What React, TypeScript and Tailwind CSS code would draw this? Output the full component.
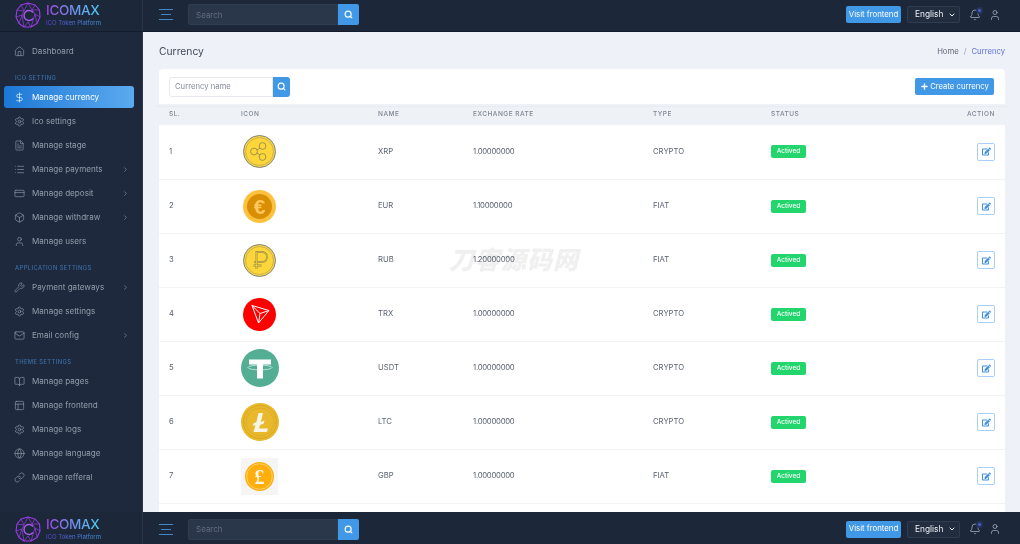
import React from 'react'
import {
  Home, DollarSign, Settings, FileText, List, CreditCard, Box, User, Wrench, Mail,
  BookOpen, Layout, Globe, Link as LinkIcon, Bell, Search, ChevronRight, ChevronDown, Plus,
} from 'lucide-react'
import { FaEdit } from 'react-icons/fa'

const font = "font-['Inter','Liberation_Sans',sans-serif]"

function Logo() {
  return (
    <div className="flex items-center gap-[5px]">
      <svg width="26" height="26" viewBox="0 0 26 26" fill="none" stroke="#9a3ce6" strokeWidth="1.100" strokeLinejoin="round">
        <polygon points="13,1 20,3 24.500,8 25,15 22,21.500 16,25 9,25 4,21.500 1,15 2,8 6,3" />
        <path d="M6 3l3 6 4-8 4 7 3-5M2 8l7 1M17 8l7.500 0M1 15l6-2 2-4M25 15l-5-3-3-4M4 21.500l3-8.500 2 12M22 21.500l-2-9.500-4 13M9 25l4-5 3 5" strokeWidth="0.7" />
        <path d="M18 10.500a5 5 0 1 0 0 6" strokeWidth="1.400" stroke="#a45cea" />
      </svg>
      <div className="flex flex-col">
        <span className="bg-gradient-to-r from-[#a03fe0] via-[#6f8fe8] to-[#45d0ee] bg-clip-text text-[13.500px] leading-[15px] font-medium tracking-[-0.3px] text-transparent">ICOMAX</span>
        <span className="mt-[1px] bg-gradient-to-r from-[#5a44d8] to-[#3f9bd8] bg-clip-text text-[6px] leading-[8px] font-normal text-transparent">ICO Token Platform</span>
      </div>
    </div>
  )
}

function TopBar({ className }: { className: string }) {
  return (
    <header className={`flex h-[34px] shrink-0 bg-[#1c273a] ${className}`}>
      <div className="flex w-[143px] shrink-0 items-center border-r border-[#2b3648] pl-[15px]">
        <Logo />
      </div>
      <div className="flex flex-1 items-center pr-[19px] pl-4">
        <svg width="14" height="11" viewBox="0 0 14 11" className="mr-[15px]" stroke="#3f87c9" strokeWidth="1">
          <path d="M0 .5h14M2 5.500h10M0 10.500h14" />
        </svg>
        <div className="flex h-[21px] w-[171px]">
          <div className="flex flex-1 items-center rounded-l-[2px] border border-[#303c50] bg-[#2a3649] pl-[7px] text-[8px] text-[#626d7f]">Search</div>
          <div className="flex w-[21px] items-center justify-center rounded-r-[2px] bg-[#4098e6]">
            <Search size={9} strokeWidth={3} className="text-white" />
          </div>
        </div>
        <div className="flex-1" />
        <div className="flex h-[17px] w-[55px] items-center justify-center rounded-[2px] bg-[#4098e6] text-[7.800px] font-normal text-white">Visit frontend</div>
        <div className="ml-[6px] flex h-[17px] w-[53px] items-center justify-between rounded-[2px] border border-[#303c50] bg-[#222d40] pr-[3px] pl-[7px] text-[8.300px] font-normal text-[#eef1f5]">
          English
          <ChevronDown size={8} strokeWidth={3} />
        </div>
        <div className="relative ml-[8px] flex w-[14px] justify-center">
          <Bell size={12} strokeWidth={1.500} className="text-[#aab2bf]" />
          <span className="absolute top-[-2px] right-[-1px] size-[7px] rounded-full bg-[#26345a]" />
          <span className="absolute top-[0px] right-[1px] size-[3px] rounded-full bg-[#4a5fd0]" />
        </div>
        <User size={12} strokeWidth={1.500} className="ml-[7px] text-[#aab2bf]" />
      </div>
    </header>
  )
}

type NavItem = { label: string; icon: React.ElementType; arrow?: boolean; active?: boolean }

function NavRow({ item }: { item: NavItem }) {
  const Icon = item.icon
  return (
    <div className="flex h-6 items-center">
      <div
        className={`mr-2 ml-1 flex h-[22px] flex-1 items-center rounded-[3px] pr-[5px] pl-[10px] ${
          item.active ? 'bg-gradient-to-r from-[#1b78d6] to-[#5aaaf0] text-white' : 'text-[#949dac]'
        }`}
      >
        <Icon size={11} strokeWidth={1.400} className="shrink-0" />
        <span className="ml-[7px] flex-1 text-[8.100px] font-normal whitespace-nowrap">{item.label}</span>
        {item.arrow && <ChevronRight size={7} strokeWidth={2} />}
      </div>
    </div>
  )
}

function SectionLabel({ text }: { text: string }) {
  return (
    <div className="flex h-[22px] items-end pb-[3px] pl-[15px] text-[5.800px] leading-[8px] font-medium tracking-[0.4px] text-[#3b6ea5]">
      {text}
    </div>
  )
}

function Sidebar() {
  return (
    <aside className="w-[143px] shrink-0 border-r border-[#2b3648] bg-[#1e293d] pt-[7px]">
      <NavRow item={{ label: 'Dashboard', icon: Home }} />
      <SectionLabel text="ICO SETTING" />
      <NavRow item={{ label: 'Manage currency', icon: DollarSign, active: true }} />
      <NavRow item={{ label: 'Ico settings', icon: Settings }} />
      <NavRow item={{ label: 'Manage stage', icon: FileText }} />
      <NavRow item={{ label: 'Manage payments', icon: List, arrow: true }} />
      <NavRow item={{ label: 'Manage deposit', icon: CreditCard, arrow: true }} />
      <NavRow item={{ label: 'Manage withdraw', icon: Box, arrow: true }} />
      <NavRow item={{ label: 'Manage users', icon: User }} />
      <SectionLabel text="APPLICATION SETTINGS" />
      <NavRow item={{ label: 'Payment gateways', icon: Wrench, arrow: true }} />
      <NavRow item={{ label: 'Manage settings', icon: Settings }} />
      <NavRow item={{ label: 'Email config', icon: Mail, arrow: true }} />
      <SectionLabel text="THEME SETTINGS" />
      <NavRow item={{ label: 'Manage pages', icon: BookOpen }} />
      <NavRow item={{ label: 'Manage frontend', icon: Layout }} />
      <NavRow item={{ label: 'Manage logs', icon: Settings }} />
      <NavRow item={{ label: 'Manage language', icon: Globe }} />
      <NavRow item={{ label: 'Manage refferal', icon: LinkIcon }} />
    </aside>
  )
}

function CoinXrp() {
  return (
    <svg width="33" height="33" viewBox="0 0 33 33" fill="none" className="block">
      <circle cx="16.500" cy="16.500" r="16" fill="#fdd63a" stroke="#7d8284" />
      <circle cx="16.500" cy="16.500" r="14" stroke="#a09a6c" strokeWidth="0.6" />
      <g stroke="#8d8450" strokeWidth="0.8">
        <circle cx="19.500" cy="11" r="3.400" />
        <circle cx="19.500" cy="22" r="3.400" />
        <circle cx="11" cy="16.500" r="3.400" />
        <path d="M14 15l3-2M14 18l3 2" />
      </g>
    </svg>
  )
}

function CoinEur() {
  return (
    <svg width="33" height="33" viewBox="0 0 33 33" className="block">
      <circle cx="16.500" cy="16.500" r="16.500" fill="#fdc13e" />
      <circle cx="16.500" cy="16.500" r="12.500" fill="#d98e04" />
      <text x="16.500" y="24" textAnchor="middle" fontSize="21" fontWeight="700" fontFamily="Liberation Sans" fill="#fdc95c">€</text>
    </svg>
  )
}

function CoinRub() {
  return (
    <svg width="33" height="33" viewBox="0 0 33 33" fill="none" className="block">
      <circle cx="16.500" cy="16.500" r="16" fill="#fdd63a" stroke="#7d8284" />
      <circle cx="16.500" cy="16.500" r="14" stroke="#a09a6c" strokeWidth="0.6" />
      <path d="M13.500 25V8h5.500a5 5 0 0 1 0 10h-8M10.500 21.500h8" stroke="#8d8450" strokeWidth="1.800" />
      <path d="M13.500 25V8h5.500a5 5 0 0 1 0 10h-8M10.500 21.500h8" stroke="#fdd63a" strokeWidth="0.7" />
    </svg>
  )
}

function CoinTrx() {
  return (
    <svg width="33" height="33" viewBox="0 0 33 33" fill="none" className="block">
      <circle cx="16.500" cy="16.500" r="16.500" fill="#fe0000" />
      <path d="M9 7.500l17 5-10.500 12.500zM9 7.500l8 8 9-3M17 15.500l-1.500 9.500" stroke="#fff" strokeWidth="1" strokeLinejoin="round" />
    </svg>
  )
}

function CoinUsdt() {
  return (
    <svg width="38" height="38" viewBox="0 0 38 38" fill="none" className="block">
      <circle cx="19" cy="19" r="19" fill="#53ae94" />
      <path d="M8 10.500h22v5h-8v14h-6v-14H8z" fill="#fff" />
      <ellipse cx="19" cy="18.500" rx="12" ry="2.400" stroke="#fff" strokeWidth="0.8" opacity="0.75" />
    </svg>
  )
}

function CoinLtc() {
  return (
    <svg width="38" height="38" viewBox="0 0 38 38" fill="none" className="block">
      <circle cx="19" cy="19" r="19" fill="#e8b92c" />
      <circle cx="19" cy="19" r="16.500" stroke="#d5a01f" strokeWidth="0.8" />
      <circle cx="19" cy="19" r="14" stroke="#d5a01f" strokeWidth="0.5" />
      <path d="M17.500 10h4.500l-2.200 9 3.700-1.400-.8 3-3.700 1.400-.8 3.500H27l-1 3.500H12.500l2-7-2.800 1 .8-2.800 2.800-1z" fill="#f8f4e6" />
    </svg>
  )
}

function CoinGbp() {
  return (
    <div className="flex size-[37px] items-center justify-center bg-[#f5f5f5]">
      <svg width="29" height="29" viewBox="0 0 29 29" fill="none" className="block">
        <circle cx="14.500" cy="14.500" r="14.500" fill="#ffae0c" />
        <circle cx="14.500" cy="14.500" r="12.800" stroke="#ffdf9a" strokeWidth="0.7" />
        <text x="14.500" y="21.500" textAnchor="middle" fontSize="20" fontWeight="700" fontFamily="Liberation Serif" fill="#fff7e6">£</text>
      </svg>
    </div>
  )
}

const rows = [
  { id: 1, icon: <CoinXrp />, name: 'XRP', rate: '1.00000000', type: 'CRYPTO', pad: 'pl-[2px]' },
  { id: 2, icon: <CoinEur />, name: 'EUR', rate: '1.10000000', type: 'FIAT', pad: 'pl-[2px]' },
  { id: 3, icon: <CoinRub />, name: 'RUB', rate: '1.20000000', type: 'FIAT', pad: 'pl-[2px]' },
  { id: 4, icon: <CoinTrx />, name: 'TRX', rate: '1.00000000', type: 'CRYPTO', pad: 'pl-[2px]' },
  { id: 5, icon: <CoinUsdt />, name: 'USDT', rate: '1.00000000', type: 'CRYPTO', pad: '' },
  { id: 6, icon: <CoinLtc />, name: 'LTC', rate: '1.00000000', type: 'CRYPTO', pad: '' },
  { id: 7, icon: <CoinGbp />, name: 'GBP', rate: '1.00000000', type: 'FIAT', pad: '' },
]

const th = 'text-left text-[6.500px] font-medium tracking-[0.5px] text-[#7d8491]'

function CurrencyTable() {
  return (
    <table className="w-[846px] table-fixed border-collapse">
      <colgroup>
        <col className="w-[82px]" />
        <col className="w-[137px]" />
        <col className="w-[95px]" />
        <col className="w-[180px]" />
        <col className="w-[118px]" />
        <col className="w-[118px]" />
        <col className="w-[116px]" />
      </colgroup>
      <thead>
        <tr className="h-[21px] bg-[#eef1f6]">
          <th className={`${th} pl-[10px]`}>SL.</th>
          <th className={th}>ICON</th>
          <th className={th}>NAME</th>
          <th className={th}>EXCHANGE RATE</th>
          <th className={th}>TYPE</th>
          <th className={th}>STATUS</th>
          <th className={`${th} pr-[10px] text-right`}>ACTION</th>
        </tr>
      </thead>
      <tbody className="text-[7.700px] text-[#5a6270]">
        {rows.map(r => (
          <tr key={r.id} className="h-[54px] border-b border-[#f1f3f7]">
            <td className="pl-[10px]">{r.id}</td>
            <td className={r.pad}>{r.icon}</td>
            <td>{r.name}</td>
            <td className="tracking-[-0.25px]">{r.rate}</td>
            <td>{r.type}</td>
            <td>
              <span className="inline-flex h-[13px] w-[35px] items-center justify-center rounded-[2px] bg-[#22d66d] text-[6.500px] leading-[13px] font-medium text-white">Actived</span>
            </td>
            <td className="pr-[10px]">
              <div className="ml-auto flex h-[18px] w-[18px] items-center justify-center rounded-[2px] border border-[#a8d0f5] text-[#3f8fe0]">
                <FaEdit size={9} />
              </div>
            </td>
          </tr>
        ))}
        <tr className="h-[54px]">
          <td />
          <td className="pl-[2px]">
            <svg width="33" height="33" viewBox="0 0 33 33" className="block"><circle cx="16.500" cy="16.500" r="16.500" fill="#e8b40c" /></svg>
          </td>
          <td colSpan={5} />
        </tr>
      </tbody>
    </table>
  )
}

export default function App() {
  return (
    <div className={`relative flex h-[544px] w-[1020px] flex-col overflow-hidden bg-[#eef1f7] ${font}`}>
      <TopBar className="-mt-[2px] border-b border-[#141c2b]" />
      <div className="flex min-h-0 flex-1">
        <Sidebar />
        <main className="min-w-0 flex-1 overflow-hidden pt-[1px] pr-[15px] pl-4">
          <div className="flex h-9 items-center justify-between pt-[1px]">
            <h1 className="text-[10.300px] font-normal text-[#434c5c]">Currency</h1>
            <div className="flex items-center text-[7.700px] text-[#5f6775]">
              Home
              <span className="mx-[5px] text-[#9aa1ad]">/</span>
              <span className="text-[#5f6fd8]">Currency</span>
            </div>
          </div>
          <section className="overflow-hidden rounded-t-[4px] bg-white">
            <div className="flex h-[35px] items-center justify-between pr-[11px] pl-[10px]">
              <div className="flex h-5">
                <div className="flex w-[104px] items-center rounded-l-[3px] border border-[#e6e9ef] pl-[5px] text-[7.700px] text-[#848b97]">Currency name</div>
                <div className="flex w-[17px] items-center justify-center rounded-r-[3px] bg-[#4098e6]">
                  <Search size={9} strokeWidth={3} className="text-white" />
                </div>
              </div>
              <button className="flex h-[17px] w-[79px] items-center justify-center rounded-[2px] bg-[#4098e6] text-[7.700px] font-normal text-white">
                <Plus size={9} strokeWidth={3.500} className="mr-[1px]" />
                Create currency
              </button>
            </div>
            <CurrencyTable />
          </section>
        </main>
      </div>
      <TopBar className="-mb-[2px]" />
      <span className="pointer-events-none absolute top-[106px] left-[155px] h-px w-[855px] bg-[#e8ebf1]" />
      <span className="pointer-events-none absolute top-[243px] left-[449px] font-['Noto_Sans_CJK_SC',sans-serif] text-[25px] leading-[30px] font-black tracking-[1px] whitespace-nowrap text-[#f0f0f0] italic mix-blend-multiply">刀客源码网</span>
    </div>
  )
}
